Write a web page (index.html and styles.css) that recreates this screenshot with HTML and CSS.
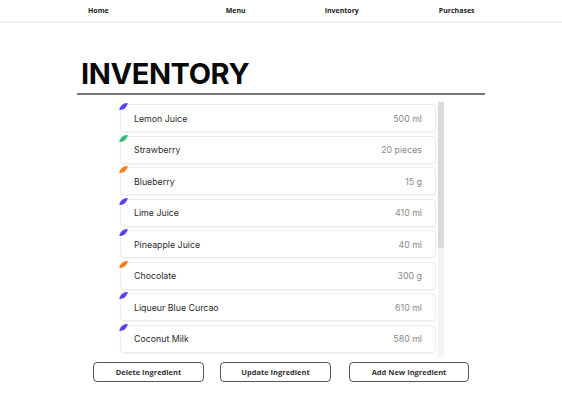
FILE: index.html
```html
<!DOCTYPE html>
<html>
<head>
<meta charset="utf-8">
<link rel="stylesheet" href="styles.css">
</head>
<body>
<nav class="nav">
  <a class="nav-link home">Home</a>
  <a class="nav-link menu">Menu</a>
  <a class="nav-link inv">Inventory</a>
  <a class="nav-link purch">Purchases</a>
</nav>
<main class="main">
  <h1 class="title">INVENTORY</h1>
  <div class="rule"></div>
  <div class="list-wrap">
    <div class="list">
      <div class="item"><span class="leaf blue"></span><span class="name">Lemon Juice</span><span class="qty">500 ml</span></div>
      <div class="item"><span class="leaf green"></span><span class="name">Strawberry</span><span class="qty">20 pieces</span></div>
      <div class="item"><span class="leaf orange"></span><span class="name">Blueberry</span><span class="qty">15 g</span></div>
      <div class="item"><span class="leaf blue"></span><span class="name">Lime Juice</span><span class="qty">410 ml</span></div>
      <div class="item"><span class="leaf blue"></span><span class="name">Pineapple Juice</span><span class="qty">40 ml</span></div>
      <div class="item"><span class="leaf orange"></span><span class="name">Chocolate</span><span class="qty">300 g</span></div>
      <div class="item"><span class="leaf blue"></span><span class="name">Liqueur Blue Curcao</span><span class="qty">610 ml</span></div>
      <div class="item"><span class="leaf blue"></span><span class="name">Coconut Milk</span><span class="qty">580 ml</span></div>
    </div>
    <div class="scrollbar"><div class="thumb"></div></div>
  </div>
  <div class="actions">
    <button class="btn btn-del">Delete Ingredient</button>
    <button class="btn btn-upd">Update Ingredient</button>
    <button class="btn btn-add">Add New Ingredient</button>
  </div>
</main>
</body>
</html>
```
FILE: styles.css
```css
* { box-sizing: border-box; }
html, body { margin: 0; padding: 0; background: #fff; }
body { font-family: "Open Sans", "Liberation Sans", sans-serif; color: #222; width: 562px; height: 413px; overflow: hidden; }

.nav {
  height: 23px;
  border-bottom: 2px solid #efefef;
  display: flex;
  align-items: center;
  padding-left: 88px;
  padding-bottom: 1px;
}
.nav-link { font-size: 7px; font-weight: 700; color: #1a1a1a; text-decoration: none; }
.menu { margin-left: 117px; }
.inv { margin-left: 79px; }
.purch { margin-left: 80px; }

.main { padding-left: 77px; width: 485px; }
.title {
  margin: 36px 0 0 4px;
  font-family: "Inter", "Liberation Sans", sans-serif;
  font-weight: 700;
  font-size: 29px;
  line-height: 30px;
  letter-spacing: -0.4px;
  color: #0a0a0a;
}
.rule { margin-top: 4px; height: 2px; background: #777; width: 408px; }

.list-wrap {
  display: flex;
  margin: 7px 0 0 40px;
  width: 327px;
  height: 255px;
}
.list {
  flex: 1;
  height: 255px;
  overflow: hidden;
  padding: 2px 2px 0 3px;
}
.scrollbar {
  width: 6px;
  height: 255px;
  background: #f3f3f3;
}
.thumb { width: 6px; height: 146px; background: #dadada; }

.item {
  position: relative;
  height: 28px;
  margin-bottom: 3.55px;
  border: 1px solid #ececec;
  border-radius: 4px;
  box-shadow: 0 1px 2px rgba(0,0,0,0.06);
  display: flex;
  align-items: center;
  justify-content: space-between;
  padding: 0 13px 0 13px;
  font-family: "Inter", "Liberation Sans", sans-serif;
  font-size: 8.8px;
}
.name { color: #2a2a2a; }
.qty { color: #8a8a8a; }

.leaf {
  position: absolute;
  left: -1px;
  top: -2px;
  width: 7px;
  height: 7px;
  border-radius: 6px 0 6px 0;
  transform: skewX(-12deg);
}
.blue { background: #5446ee; }
.green { background: #2fbf7f; }
.orange { background: #f47e1a; }

.actions {
  display: flex;
  margin: 5px 0 0 16px;
}
.btn {
  height: 20px;
  border: 1px solid #555;
  border-radius: 4px;
  background: #fff;
  font-family: "Open Sans", "Liberation Sans", sans-serif;
  font-weight: 700;
  font-size: 7.5px;
  line-height: 18px;
  color: #333;
  padding: 0;
}
.btn-del { width: 111px; }
.btn-upd { width: 111px; margin-left: 16px; }
.btn-add { width: 120px; margin-left: 18px; }
```
